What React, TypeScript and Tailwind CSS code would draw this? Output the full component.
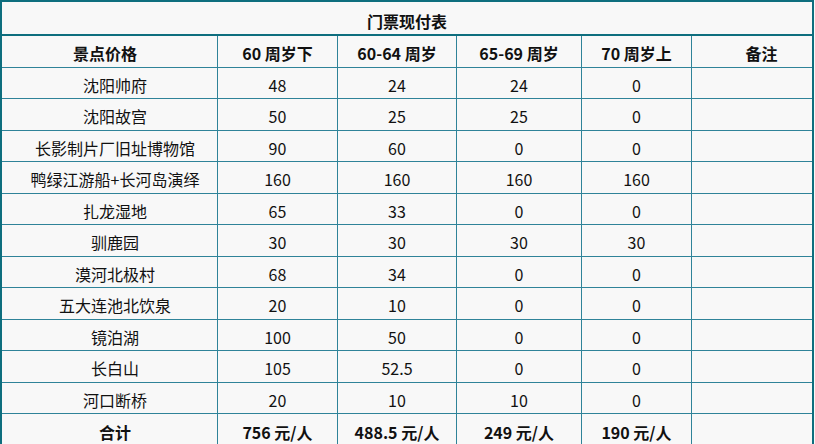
const rows: [string, string, string, string, string][] = [
  ["沈阳帅府", "48", "24", "24", "0"],
  ["沈阳故宫", "50", "25", "25", "0"],
  ["长影制片厂旧址博物馆", "90", "60", "0", "0"],
  ["鸭绿江游船+长河岛演绎", "160", "160", "160", "160"],
  ["扎龙湿地", "65", "33", "0", "0"],
  ["驯鹿园", "30", "30", "30", "30"],
  ["漠河北极村", "68", "34", "0", "0"],
  ["五大连池北饮泉", "20", "10", "0", "0"],
  ["镜泊湖", "100", "50", "0", "0"],
  ["长白山", "105", "52.5", "0", "0"],
  ["河口断桥", "20", "10", "10", "0"],
];

const grid = "grid grid-cols-[216px_120px_119px_125px_110px_120px]";
const cell = "flex items-center justify-center border-r border-[#2f8399] pt-[3px]";

export default function App() {
  return (
    <div
      className="min-h-screen bg-[#f8f8f8] text-[16px] text-[#111]"
      style={{ fontFamily: '"Noto Sans CJK SC", "Noto Sans", sans-serif' }}
    >
      <div className="w-[814px] border-x-2 border-t-2 border-[#0e6e7e] bg-[#f8f8f8]">
        <div className="flex h-[34px] items-center justify-center border-b-2 border-[#0e6e7e] pt-[5px] font-bold">
          门票现付表
        </div>

        <div className={`${grid} h-[32px] border-b border-[#2f8399] font-bold`}>
          <div className={`${cell} pr-[9px]`}>景点价格</div>
          <div className={cell}>60 周岁下</div>
          <div className={cell}>60-64 周岁</div>
          <div className={cell}>65-69 周岁</div>
          <div className={cell}>70 周岁上</div>
          <div className="flex items-center justify-center pl-[19px] pt-[3px]">备注</div>
        </div>

        {rows.map((r, i) => (
          <div
            key={r[0]}
            className={`${grid} ${i % 2 === 0 ? "h-[31px]" : "h-[32px]"} border-b border-[#2f8399]`}
          >
            <div className={`${cell} pl-[11px]`}>{r[0]}</div>
            <div className={cell}>{r[1]}</div>
            <div className={cell}>{r[2]}</div>
            <div className={cell}>{r[3]}</div>
            <div className={cell}>{r[4]}</div>
            <div />
          </div>
        ))}

        <div className={`${grid} h-[32px] font-bold`}>
          <div className={`${cell} pl-[11px]`}>合计</div>
          <div className={cell}>756 元/人</div>
          <div className={cell}>488.5 元/人</div>
          <div className={cell}>249 元/人</div>
          <div className={cell}>190 元/人</div>
          <div />
        </div>
      </div>
    </div>
  );
}
